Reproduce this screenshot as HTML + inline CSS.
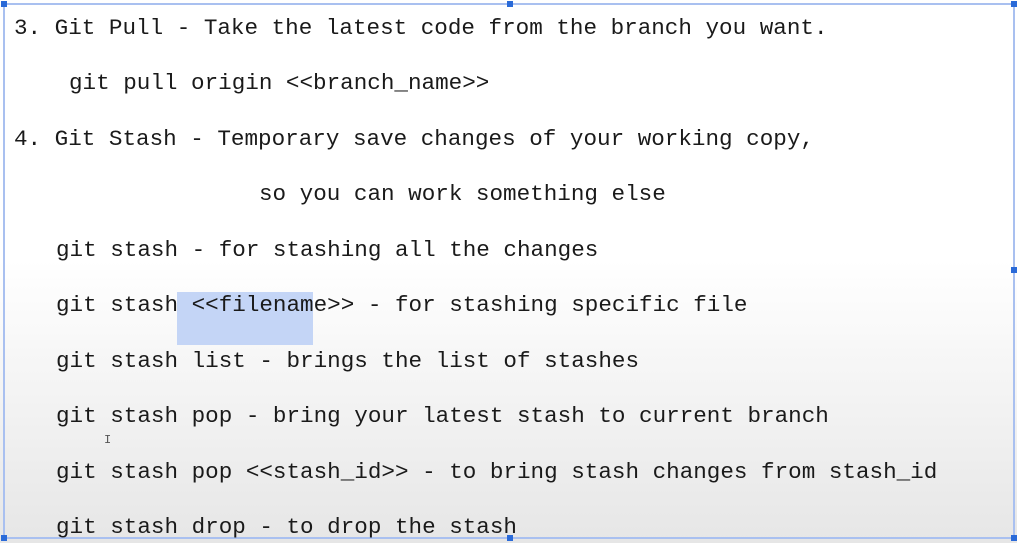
<!DOCTYPE html>
<html><head><meta charset="utf-8"><style>
html,body{margin:0;padding:0;}
body{width:1017px;height:543px;overflow:hidden;position:relative;
background:linear-gradient(to bottom,#fff 0px,#fff 260px,#f3f3f3 400px,#e6e6e6 543px);
font-family:"Liberation Mono",monospace;font-size:22.6px;color:#1a1a1a;}
.l{position:absolute;white-space:pre;line-height:26px;}
.b{position:absolute;background:#a9c0f0;}
.h{position:absolute;width:6px;height:6px;background:#2a6ad8;}
.hl{position:absolute;left:177px;top:292px;width:136px;height:53px;background:#c4d5f6;}
</style></head><body>
<div class="b" style="left:3px;top:3px;width:1012px;height:2px"></div>
<div class="b" style="left:3px;top:3px;width:2px;height:536px"></div>
<div class="b" style="left:1013px;top:3px;width:2px;height:536px"></div>
<div class="b" style="left:3px;top:537px;width:1012px;height:2px"></div>
<div class="h" style="left:1px;top:1px"></div>
<div class="h" style="left:1011px;top:267px"></div>
<div class="h" style="left:1px;top:535px"></div>
<div class="h" style="left:507px;top:535px"></div>
<div class="h" style="left:1011px;top:535px"></div>
<div class="h" style="left:507px;top:1px"></div>
<div class="h" style="left:1011px;top:1px"></div>
<div class="hl"></div>
<div class="l" style="left:14px;top:15px">3. Git Pull - Take the latest code from the branch you want.</div>
<div class="l" style="left:69px;top:70px">git pull origin &lt;&lt;branch_name&gt;&gt;</div>
<div class="l" style="left:14px;top:126px">4. Git Stash - Temporary save changes of your working copy,</div>
<div class="l" style="left:259px;top:181px">so you can work something else</div>
<div class="l" style="left:56px;top:237px">git stash - for stashing all the changes</div>
<div class="l" style="left:56px;top:292px">git stash &lt;&lt;filename&gt;&gt; - for stashing specific file</div>
<div class="l" style="left:56px;top:348px">git stash list - brings the list of stashes</div>
<div class="l" style="left:56px;top:403px">git stash pop - bring your latest stash to current branch</div>
<div class="l" style="left:104px;top:427px;font-size:12px;color:#555">I</div>
<div class="l" style="left:56px;top:459px">git stash pop &lt;&lt;stash_id&gt;&gt; - to bring stash changes from stash_id</div>
<div class="l" style="left:56px;top:514px">git stash drop - to drop the stash</div>
</body></html>
